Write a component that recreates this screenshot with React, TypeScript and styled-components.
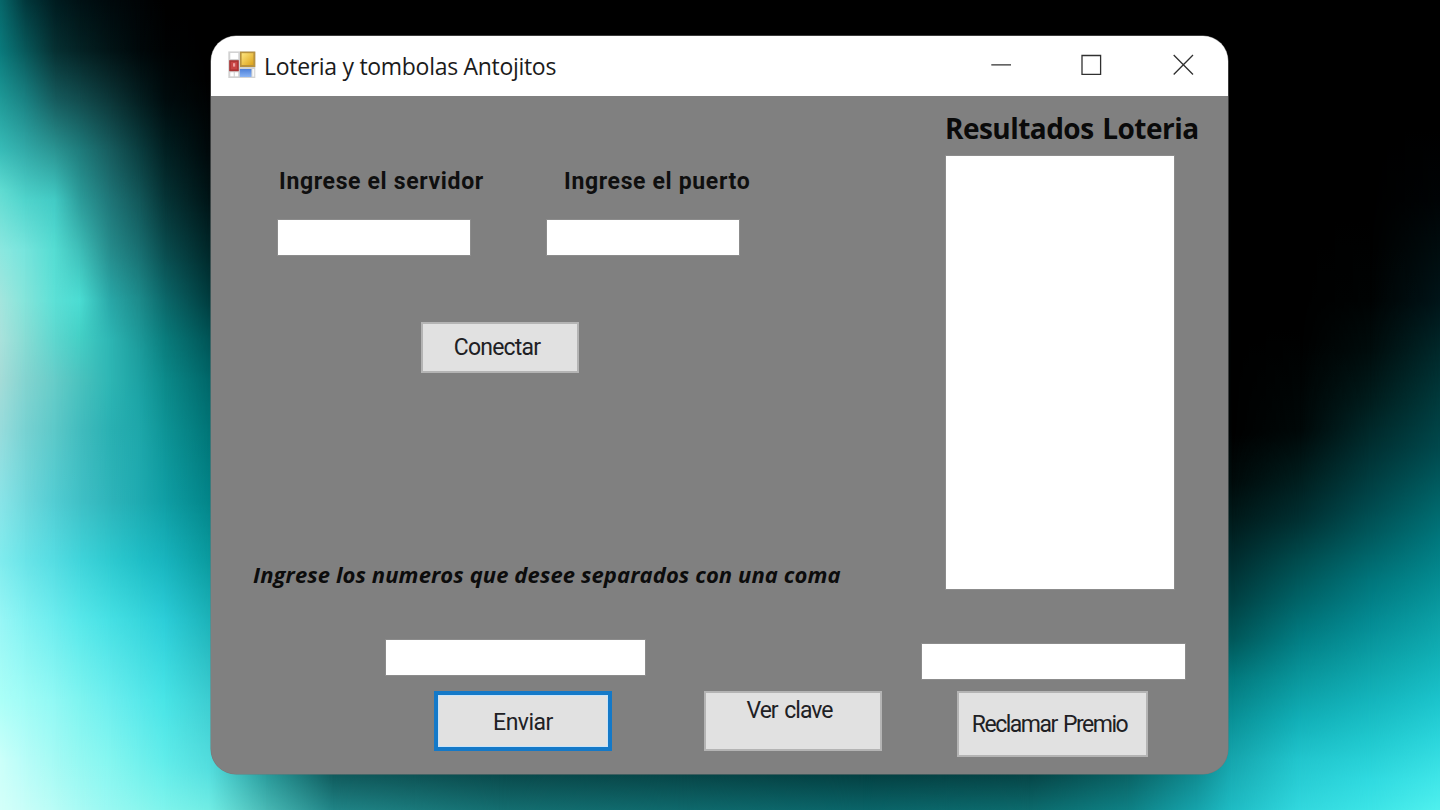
import React from "react";
import styled, { createGlobalStyle } from "styled-components";

const GlobalStyle = createGlobalStyle`
  * { box-sizing: border-box; }
  html, body { margin: 0; padding: 0; background: #000; overflow: hidden; }
`;

/* The wallpaper is a colour mesh: each column is a vertical gradient that fades into the next one. */
type Column = { x: number; stops: string };

const columns: Column[] = [
  { x: 0, stops: "#07686b 0, #0a7a7c 50px, #1f9a98 100px, #38bcb8 150px, #60dcd2 190px, #8ce8e0 250px, #a4e6de 300px, #aae2dc 340px, #a5dcd8 380px, #98dcdc 430px, #8ae4e8 500px, #80ecee 560px, #98f6f6 620px, #acfff8 700px, #ccfffa 760px, #d4fffa 810px" },
  { x: 25, stops: "#02383c 0, #08585a 50px, #1a8283 100px, #32aaa8 150px, #50d4cc 200px, #76e4dc 250px, #84e4da 300px, #88dcd4 340px, #84d4d0 380px, #78d2d2 430px, #70d8dc 500px, #6ae4e8 560px, #82f2f2 620px, #a0fcf6 700px, #b8fdf8 760px, #c8fef8 810px" },
  { x: 55, stops: "#001c20 0, #063032 50px, #165c5e 100px, #2a9492 150px, #42cac4 200px, #54dcd2 250px, #5ce0d6 300px, #5ed6ce 340px, #66ccc8 380px, #5cc8c8 430px, #52ccd2 500px, #54dce2 560px, #6cecee 620px, #90f8f4 700px, #a4faf4 760px, #b8fcf6 810px" },
  { x: 80, stops: "#001114 0, #042224 50px, #124c4e 100px, #1f7c7c 150px, #2c9c9a 200px, #3ebeb8 250px, #4adcd2 300px, #44d0c6 335px, #4ac2be 380px, #42bcbe 430px, #40c0c6 500px, #40d4da 560px, #58e8ea 620px, #7ef4f0 700px, #94f8f2 760px, #a8faf4 810px" },
  { x: 110, stops: "#00090c 0, #021416 50px, #0c3638 100px, #175c5e 150px, #1f7678 200px, #268c8c 250px, #2aa8a8 300px, #2eb6b4 340px, #2eb6b4 380px, #2ab0b2 430px, #2eb4ba 500px, #2ecad0 560px, #46e0e4 620px, #6ceeee 700px, #84f6f0 760px, #98f8f2 810px" },
  { x: 140, stops: "#000406 0, #00080a 50px, #041e20 100px, #0a3c3e 150px, #125658 200px, #186e70 250px, #1c8a8a 300px, #1c9c9c 350px, #1ca4a6 400px, #1ea8ac 450px, #1eaab0 500px, #20bec6 560px, #38d6dc 620px, #58e8ea 700px, #70f0ec 760px, #8af6ee 810px" },
  { x: 165, stops: "#000 0, #000304 50px, #000c0e 100px, #022022 150px, #063436 200px, #0a4c4e 250px, #0c686a 300px, #0a7c7c 340px, #0c8a8a 380px, #0e9496 430px, #109ea4 500px, #18b4be 560px, #2ccdd8 620px, #48e4e6 700px, #60ecea 760px, #7ef4ec 810px" },
  { x: 210, stops: "#000 0, #000 80px, #00080a 150px, #001416 200px, #002628 250px, #003c3e 300px, #005456 340px, #006668 380px, #007476 430px, #028488 500px, #0a9a9e 560px, #1cb2b8 620px, #3cccd0 700px, #54dede 770px, #70ece4 810px" },
  { x: 266, stops: "#000 0, #000 100px, #2a9c9c 774px, #48b8b4 810px" },
  { x: 333, stops: "#000 0, #000 100px, #105a5c 774px, #208486 810px" },
  { x: 498, stops: "#000 0, #000 100px, #0a4a4c 774px, #146e70 810px" },
  { x: 863, stops: "#000 0, #000 100px, #044042 774px, #0a6468 810px" },
  { x: 1029, stops: "#000 0, #000 100px, #064446 774px, #0c6a6c 810px" },
  { x: 1128, stops: "#000 0, #000 100px, #0a6264 774px, #0e8084 810px" },
  { x: 1195, stops: "#000 0, #000 100px, #108a90 774px, #16a2aa 810px" },
  { x: 1232, stops: "#000 430px, #000a0a 480px, #001a1a 520px, #002c2e 560px, #004042 600px, #00585a 640px, #037a7e 680px, #0a9298 720px, #16a6ae 760px, #1fbcc4 810px" },
  { x: 1300, stops: "#000 330px, #000808 430px, #001e1e 480px, #003032 520px, #004c4e 560px, #006468 600px, #027e84 640px, #0a989e 680px, #12b0b8 720px, #22c6ce 760px, #32d8de 810px" },
  { x: 1370, stops: "#000 220px, #000303 300px, #000c0c 350px, #001c1c 400px, #003032 450px, #00464a 500px, #005c60 540px, #00757b 580px, #048a92 620px, #0ca0a6 660px, #14b4bc 700px, #20c8ce 740px, #30dae0 780px, #3ce4e6 810px" },
  { x: 1440, stops: "#000 130px, #000305 200px, #000c0e 250px, #001418 300px, #00282a 350px, #003a3c 400px, #004a4e 450px, #006468 500px, #00787e 540px, #048c92 580px, #0ca0a6 620px, #12b2b8 660px, #1cc4cc 700px, #2cd6dc 740px, #40e6e8 780px, #50f0ee 810px" },
];

const Desktop = styled.main`
  display: grid;
  width: 1440px;
  height: 810px;
  overflow: hidden;
  & > * { grid-area: 1 / 1; }
`;

const Band = styled.div<{ $stops: string; $from: number; $to: number }>`
  background: linear-gradient(to bottom, ${(p) => p.$stops});
  ${(p) =>
    p.$to > 0 &&
    `mask-image: linear-gradient(to right, transparent ${p.$from}px, #000 ${p.$to}px);`}
`;

const Window = styled.section`
  display: flex;
  flex-direction: column;
  width: 1017px;
  height: 738px;
  margin: 36px 0 0 211px;
  border-radius: 25px;
  overflow: hidden;
  background: #808080;
  box-shadow: 0 0 0 0.5px #777;
  z-index: 1;
`;

const TitleBar = styled.header`
  display: flex;
  align-items: center;
  height: 60px;
  flex: none;
  padding: 0 33px 2px 17px;
  background: #fff;
`;

const Title = styled.h1`
  margin: 2px auto 0 8px;
  font: 400 23px/32px "Open Sans", sans-serif;
  letter-spacing: -0.3px;
  color: #1b1b1b;
  white-space: nowrap;
`;

const Controls = styled.div`
  display: flex;
  gap: 69px;
`;

const Body = styled.div`
  display: flex;
  flex: 1;
`;

const Entry = styled.div`
  display: flex;
  flex-direction: column;
  align-items: flex-start;
  width: 689px;
  padding: 71px 0 0 42px;
`;

const Results = styled.div`
  display: flex;
  flex-direction: column;
  align-items: flex-start;
  padding: 16px 0 0 22px;
`;

const FieldRow = styled.div`
  display: flex;
  gap: 77px;
  margin-left: 25px;
`;

const Field = styled.label`
  display: flex;
  flex-direction: column;
  gap: 23px;
  width: 192px;
`;

const Caption = styled.span<{ $indent?: number }>`
  margin-left: ${(p) => p.$indent ?? 0}px;
  font: 700 23px/30px Roboto, sans-serif;
  letter-spacing: 0.65px;
  color: #0f0f0f;
  white-space: nowrap;
`;

const Hint = styled.p`
  margin: 186px 0 0;
  font: italic 700 22px/30px "Open Sans", sans-serif;
  letter-spacing: 0.1px;
  color: #0c0c0c;
  white-space: nowrap;
`;

const Heading = styled.h2`
  margin: 0 0 12px 23px;
  font: 700 28px/32px "Open Sans", sans-serif;
  letter-spacing: -0.54px;
  word-spacing: 2px;
  color: #0a0a0a;
  white-space: nowrap;
`;

const TextBox = styled.input<{ $width: number }>`
  display: block;
  width: ${(p) => p.$width}px;
  height: 35px;
  padding: 0 6px;
  border: 0;
  outline: 1px solid #8c8c8c;
  background: #fff;
  font: 20px Roboto, sans-serif;
`;

const ResultList = styled.div`
  width: 228px;
  height: 433px;
  margin: 0 0 55px 24px;
  background: #fff;
  outline: 1px solid #8c8c8c;
`;

const Button = styled.button<{ $w: number; $h: number; $spacing: number; $primary?: boolean; $top?: boolean }>`
  display: flex;
  justify-content: center;
  align-items: ${(p) => (p.$top ? "flex-start" : "center")};
  width: ${(p) => p.$w}px;
  height: ${(p) => p.$h}px;
  padding: ${(p) => (p.$top ? "3px 7px 0 0" : p.$primary ? "3px 0 0" : "1px 6px 0 0")};
  border: ${(p) => (p.$primary ? "4px solid #1479c8" : "2px solid #b4b4b4")};
  border-radius: 0;
  background: #e1e1e1;
  box-shadow: ${(p) => (p.$primary ? "inset 0 0 0 1px #c9e3f8" : "none")};
  font: 400 23px/30px Roboto, sans-serif;
  letter-spacing: ${(p) => p.$spacing}px;
  word-spacing: 2px;
  color: #202024;
  white-space: nowrap;
`;

const ConnectRow = styled.div`
  margin: 67px 0 0 168px;
`;

const NumbersRow = styled.div`
  margin: 51px 0 0 133px;
`;

const ActionRow = styled.div`
  display: flex;
  gap: 92px;
  margin: 16px 0 0 181px;
`;

const ClaimRow = styled.div`
  margin: 12px 0 0 35px;
`;

const AppIcon = () => (
  <svg width="28" height="28" viewBox="0 0 28 28">
    <defs>
      <linearGradient id="gold" x1="0" y1="0" x2="1" y2="1">
        <stop offset="0" stopColor="#ffe680" />
        <stop offset="1" stopColor="#dba21a" />
      </linearGradient>
      <linearGradient id="blue" x1="0" y1="0" x2="0" y2="1">
        <stop offset="0" stopColor="#4c7fd8" />
        <stop offset="1" stopColor="#8ab4f4" />
      </linearGradient>
    </defs>
    <rect x="0.3" y="0.4" width="27" height="26.6" fill="#d2d2d2" />
    <rect x="2.3" y="2" width="8" height="6" fill="#fff" />
    <rect x="2.3" y="21.3" width="3.4" height="4" fill="#fff" />
    <rect x="6.8" y="21.3" width="3.4" height="4" fill="#fff" />
    <rect x="24.4" y="18" width="1.8" height="7.6" fill="#f8f8f8" />
    <rect x="12" y="0.6" width="15.3" height="15.4" fill="#b8923e" />
    <rect x="13.6" y="2.2" width="11.8" height="11.8" fill="url(#gold)" />
    <rect x="1.2" y="9.2" width="9.6" height="11" fill="#a83232" />
    <rect x="2.7" y="10.8" width="6.6" height="7.6" fill="#c84444" />
    <rect x="5" y="12.2" width="2.2" height="3.4" fill="#eda0a0" />
    <rect x="11.8" y="18" width="11.6" height="8" fill="url(#blue)" />
  </svg>
);

const ControlIcon = ({ d }: { d: string }) => (
  <svg width="23" height="22" viewBox="0 0 23 22" fill="none" stroke="#303030" strokeWidth="1.3">
    <path d={d} />
  </svg>
);

export default function App() {
  return (
    <>
      <GlobalStyle />
      <Desktop>
        {columns.map((c, i) => (
          <Band key={c.x} $stops={c.stops} $from={i ? columns[i - 1].x : 0} $to={c.x} />
        ))}
        <Window>
          <TitleBar>
            <AppIcon />
            <Title>Loteria y tombolas Antojitos</Title>
            <Controls>
              <ControlIcon d="M3.3 10.9H23" />
              <ControlIcon d="M2 1.5H20.6V20.3H2Z" />
              <ControlIcon d="M1.7 1L21 20.5M21 1L1.7 20.5" />
            </Controls>
          </TitleBar>
          <Body>
            <Entry>
              <FieldRow>
                <Field>
                  <Caption $indent={1}>Ingrese el servidor</Caption>
                  <TextBox $width={192} />
                </Field>
                <Field>
                  <Caption $indent={17}>Ingrese el puerto</Caption>
                  <TextBox $width={192} />
                </Field>
              </FieldRow>
              <ConnectRow>
                <Button $w={158} $h={51} $spacing={-0.8}>Conectar</Button>
              </ConnectRow>
              <Hint>Ingrese los numeros que desee separados con una coma</Hint>
              <NumbersRow>
                <TextBox $width={259} />
              </NumbersRow>
              <ActionRow>
                <Button $w={178} $h={60} $spacing={-0.5} $primary>Enviar</Button>
                <Button $w={178} $h={60} $spacing={-1} $top>Ver clave</Button>
              </ActionRow>
            </Entry>
            <Results>
              <Heading>Resultados Loteria</Heading>
              <ResultList />
              <TextBox $width={263} />
              <ClaimRow>
                <Button $w={191} $h={66} $spacing={-1.5}>Reclamar Premio</Button>
              </ClaimRow>
            </Results>
          </Body>
        </Window>
      </Desktop>
    </>
  );
}
